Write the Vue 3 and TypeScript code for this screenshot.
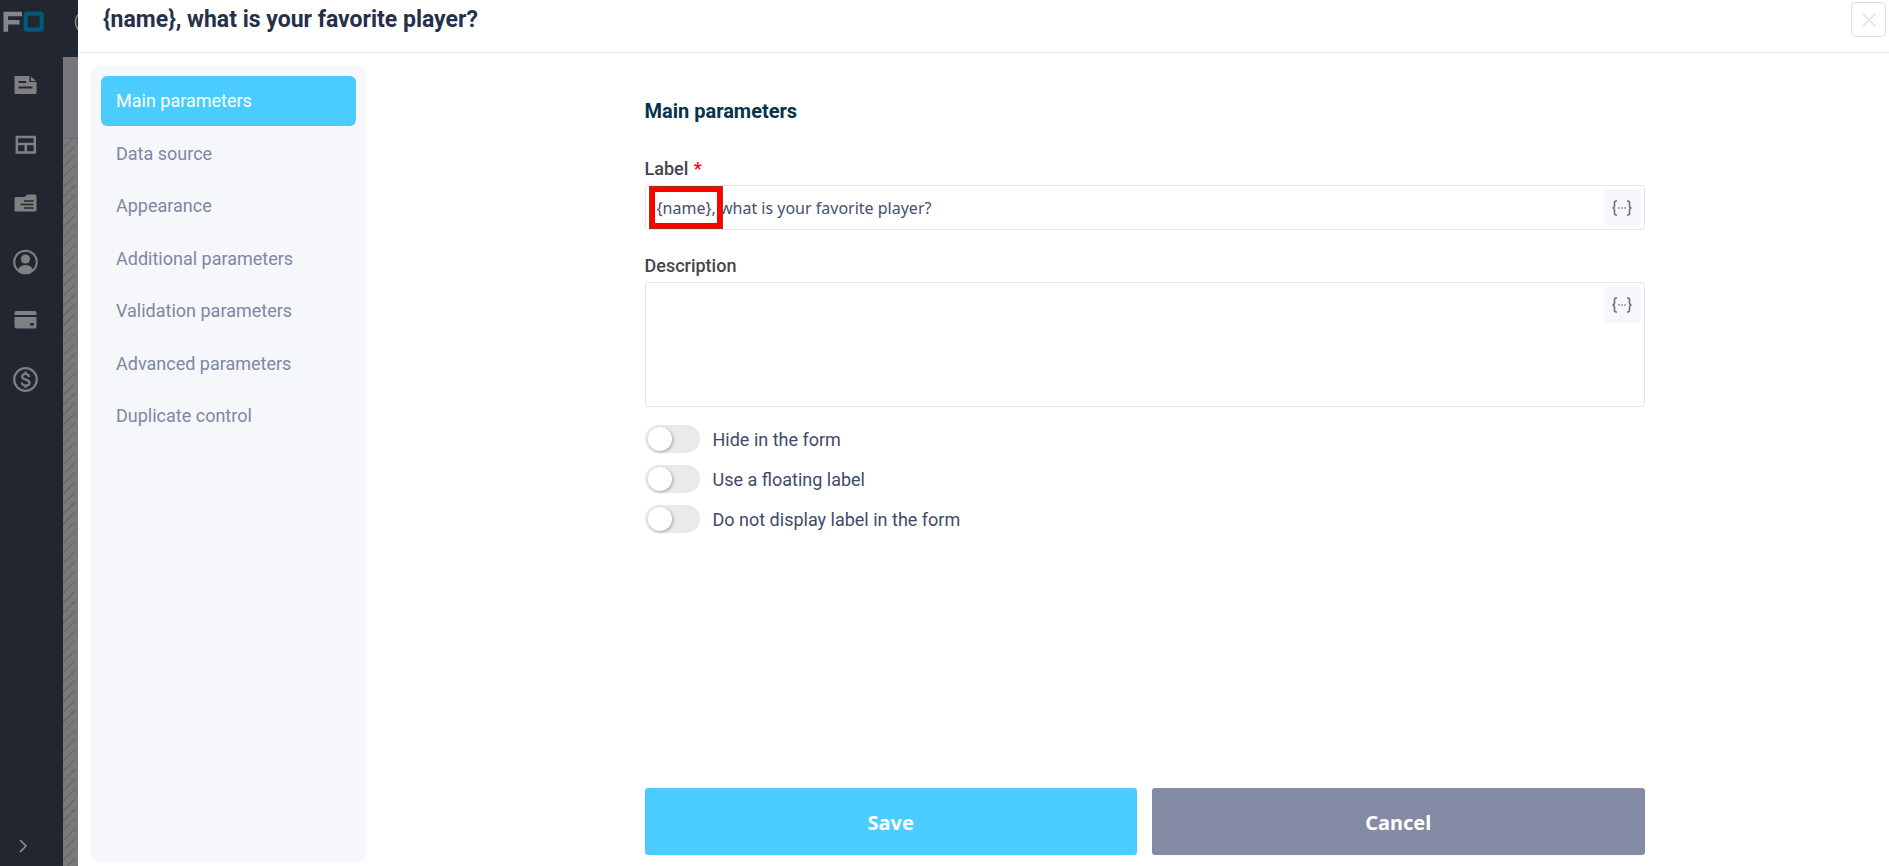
<script setup lang="ts">
import { ref } from 'vue'

const sections: string[] = [
  'Main parameters',
  'Data source',
  'Appearance',
  'Additional parameters',
  'Validation parameters',
  'Advanced parameters',
  'Duplicate control',
]
const active = ref('Main parameters')

const label = ref('{name}, what is your favorite player?')
const description = ref('')

const toggles = ref([
  { id: 'hide', text: 'Hide in the form', on: false },
  { id: 'floating', text: 'Use a floating label', on: false },
  { id: 'nolabel', text: 'Do not display label in the form', on: false },
])
</script>

<template>
  <div class="page">
    <aside class="rail">
      <a class="logo" href="#" aria-label="Home">
        <svg width="42" height="22" viewBox="0 0 42 22">
          <path d="M2.800 20.800V3H19M3 11.200H16.500" fill="none" stroke="#858687" stroke-width="4.600" />
          <rect x="22.700" y="2.700" width="16" height="16" rx="1" fill="none" stroke="#02597c" stroke-width="4.200" />
        </svg>
      </a>
      <nav class="rail-nav" aria-label="Workspace">
        <a href="#" aria-label="Forms">
          <svg viewBox="0 0 26 26">
            <path fill="#7f8081" d="M3 4h14.500v6H24.500v10.500a1.500 1.500 0 0 1-1.500 1.500H4a1.500 1.500 0 0 1-1.500-1.500V4zM19 4.500l5 4.500h-5z" />
            <path d="M6.500 10h7.500M6.500 15.500h14" stroke="#222630" stroke-width="2" />
          </svg>
        </a>
        <a href="#" aria-label="Templates">
          <svg viewBox="0 0 26 26">
            <path fill="none" stroke="#7f8081" stroke-width="2.500" d="M4.800 6h18v15.500h-18zM4.800 13h18M13.800 13v8.500" />
          </svg>
        </a>
        <a href="#" aria-label="Files">
          <svg viewBox="0 0 26 26">
            <path fill="#7f8081" d="M2.500 8.500A1.500 1.500 0 0 1 4 7h8.500L15.500 4.500H23A1.500 1.500 0 0 1 24.500 6v14a1.500 1.500 0 0 1-1.500 1.500H4A1.500 1.500 0 0 1 2.500 20z" />
            <path d="M12 11h9.500M8.500 14.500h13M12 18h9.500" stroke="#222630" stroke-width="1.500" />
          </svg>
        </a>
        <a href="#" aria-label="Profile">
          <svg viewBox="0 0 26 26">
            <circle cx="13.500" cy="13" r="11.300" fill="none" stroke="#7f8081" stroke-width="2" />
            <circle cx="13.500" cy="10" r="4.600" fill="#7f8081" />
            <path fill="#7f8081" d="M6 20.500C7.500 17.200 10.500 16 13.500 16s6 1.200 7.500 4.500C19 23 16.500 24.500 13.500 24.500S8 23 6 20.500z" />
          </svg>
        </a>
        <a href="#" aria-label="Billing">
          <svg viewBox="0 0 26 26">
            <path fill="#7f8081" d="M2.500 5a2 2 0 0 1 2-2h18a2 2 0 0 1 2 2v2H2.500zM2.500 9h22V18.500a2 2 0 0 1-2 2h-18a2 2 0 0 1-2-2z" />
            <rect x="18" y="15" width="4" height="2.500" rx="1" fill="#222630" />
          </svg>
        </a>
        <a href="#" aria-label="Prices">
          <svg viewBox="0 0 26 26">
            <circle cx="13.500" cy="12.500" r="11.300" fill="none" stroke="#7f8081" stroke-width="2.200" />
            <path fill="none" stroke="#7f8081" stroke-width="2.200" d="M17.200 10c-.2-2-1.600-3-3.600-3-2.100 0-3.500 1-3.500 2.700 0 3.800 7.400 2 7.400 6 0 1.800-1.500 2.800-3.800 2.800-2.200 0-3.800-1.100-3.900-3M13.600 4.500V7M13.600 18.500V21" />
          </svg>
        </a>
      </nav>
      <button class="expand" type="button" aria-label="Expand menu">
        <svg width="8" height="14" viewBox="0 0 8 14">
          <path d="M1 1l6 6-6 6" fill="none" stroke="#929394" stroke-width="1.500" />
        </svg>
      </button>
    </aside>

    <div class="backdrop">
      <div class="backdrop-head">
        <svg width="15" height="26" viewBox="0 0 15 26">
          <circle cx="24" cy="13" r="11.500" fill="none" stroke="#85878b" stroke-width="1.500" />
        </svg>
      </div>
      <div class="backdrop-bar"></div>
      <div class="backdrop-canvas"></div>
    </div>

    <section class="drawer" aria-labelledby="drawer-title">
      <header class="drawer-head">
        <h1 id="drawer-title">{{ label }}</h1>
        <button class="close" type="button" aria-label="Close">
          <svg width="14" height="14" viewBox="0 0 14 14">
            <path d="M.5.5l13 13M13.500.5l-13 13" stroke="#dedede" stroke-width="1.300" />
          </svg>
        </button>
      </header>

      <div class="drawer-body">
        <nav class="sections" aria-label="Sections">
          <div class="sections-list">
            <button
              v-for="s in sections"
              :key="s"
              type="button"
              :class="{ active: s === active }"
              @click="active = s"
            >{{ s }}</button>
          </div>
        </nav>

        <main class="content">
          <form class="form" @submit.prevent>
            <h2>{{ active }}</h2>

            <label class="field-label" for="f-label">Label <span class="required">*</span></label>
            <div class="box box-line">
              <input id="f-label" v-model="label" type="text" />
              <button class="insert" type="button" aria-label="Insert variable into label">
                <svg width="22" height="16" viewBox="0 0 22 16">
                  <path d="M6 1H5Q3.500 1 3.500 3v2.500Q3.500 8 1.500 8q2 0 2 2.500V13q0 2 1.500 2h1M16 1h1q1.500 0 1.500 2v2.500q0 2.500 2 2.500-2 0-2 2.500V13q0 2-1.500 2h-1" fill="none" stroke="#6e7177" stroke-width="1.600" />
                  <path d="M7 8h2M10 8h2M13 8h2" stroke="#9a9da3" stroke-width="1.300" />
                </svg>
              </button>
              <span class="marker"></span>
            </div>

            <label class="field-label" for="f-desc">Description</label>
            <div class="box box-area">
              <textarea id="f-desc" v-model="description"></textarea>
              <button class="insert" type="button" aria-label="Insert variable into description">
                <svg width="22" height="16" viewBox="0 0 22 16">
                  <path d="M6 1H5Q3.500 1 3.500 3v2.500Q3.500 8 1.500 8q2 0 2 2.500V13q0 2 1.500 2h1M16 1h1q1.500 0 1.500 2v2.500q0 2.500 2 2.500-2 0-2 2.500V13q0 2-1.500 2h-1" fill="none" stroke="#6e7177" stroke-width="1.600" />
                  <path d="M7 8h2M10 8h2M13 8h2" stroke="#9a9da3" stroke-width="1.300" />
                </svg>
              </button>
            </div>

            <div class="toggles">
              <label v-for="t in toggles" :key="t.id" :for="t.id">
                <input :id="t.id" v-model="t.on" type="checkbox" role="switch" />
                <span>{{ t.text }}</span>
              </label>
            </div>

            <footer class="actions">
              <button class="save" type="submit">Save</button>
              <button class="cancel" type="button">Cancel</button>
            </footer>
          </form>
        </main>
      </div>
    </section>
  </div>
</template>

<style>
body {
  margin: 0;
}
</style>

<style scoped>
* {
  box-sizing: border-box;
}

.page {
  display: grid;
  grid-template-columns: 63px 15px 1fr;
  min-height: 100vh;
  font-family: Roboto, 'Liberation Sans', sans-serif;
  font-size: 18px;
  line-height: 24px;
  background: #fff;
}

button {
  font: inherit;
  border: 0;
  padding: 0;
  background: none;
  cursor: pointer;
}

svg {
  display: block;
}

.rail {
  display: flex;
  flex-direction: column;
  background: #222630;
}

.logo {
  padding: 11px 0 0 3px;
  height: 72px;
}

.rail-nav {
  display: flex;
  flex-direction: column;
  gap: 33px;
  padding-left: 12px;
}

.rail-nav svg {
  width: 26px;
  height: 26px;
}

.expand {
  margin: auto 0 13px 19px;
  align-self: flex-start;
}

.backdrop {
  display: flex;
  flex-direction: column;
  background: #77787a;
}

.backdrop-head {
  height: 57px;
  padding-top: 9px;
  background: #222630;
}

.backdrop-bar {
  height: 82px;
  background: #77777b;
  border-bottom: 1px solid #6c6d6f;
}

.backdrop-canvas {
  flex: 1;
  margin-right: 3px;
  background: repeating-linear-gradient(135deg, #7a7a7a 0 5px, #696a6a 6px 7px, #7a7a7a 7px);
}

.drawer {
  display: flex;
  flex-direction: column;
  min-width: 0;
  background: #fff;
}

.drawer-head {
  display: flex;
  justify-content: space-between;
  align-items: flex-start;
  height: 53px;
  padding: 2px 3px 0 25px;
  border-bottom: 1px solid #e6e8f0;
}

h1 {
  margin: 4px 0 0;
  font-size: 23px;
  line-height: 28px;
  font-weight: 700;
  color: #27304a;
}

.close {
  display: grid;
  place-items: center;
  width: 35px;
  height: 35px;
  border: 1px solid #dedede;
  border-radius: 5px;
}

.drawer-body {
  display: flex;
  flex: 1;
  gap: 34px;
  padding: 13px 0 4px 13px;
}

.sections {
  width: 275px;
  padding: 10px;
  border-radius: 8px;
  background: #f5f7fb;
}

.sections-list {
  display: flex;
  flex-direction: column;
  justify-content: space-between;
  height: 365px;
}

.sections button {
  height: 50px;
  padding: 0 15px;
  border-radius: 6px;
  text-align: left;
  color: #7e88a1;
}

.sections .active {
  background: #4bccff;
  color: #fff;
}

.content {
  display: flex;
  flex: 1;
  justify-content: center;
}

.form {
  display: flex;
  flex-direction: column;
  width: 100%;
  max-width: 1000px;
  padding: 31px 0 7px;
}

h2 {
  margin: 0 0 32px;
  font-size: 20px;
  line-height: 28px;
  font-weight: 700;
  color: #04334a;
}

.field-label {
  margin-bottom: 4px;
  font-weight: 500;
  color: #45464b;
}

.required {
  margin-left: 1px;
  color: #f00;
}

.box {
  position: relative;
  display: flex;
  align-items: flex-start;
  padding: 3px;
  border: 1px solid #e5e6ea;
  border-radius: 3px;
}

.box-line {
  height: 45px;
  margin-bottom: 24px;
}

.box-area {
  height: 125px;
}

.box input,
.box textarea {
  flex: 1;
  min-width: 0;
  height: 100%;
  padding: 0 8px;
  border: 0;
  outline: 0;
  resize: none;
  background: none;
  color: #44506e;
  font-family: 'Noto Sans', sans-serif;
  font-size: 16px;
}

.insert {
  display: grid;
  place-items: center;
  width: 37px;
  height: 37px;
  border-radius: 4px;
  background: #f5f7fb;
}

.marker {
  position: absolute;
  left: 3px;
  top: 0;
  width: 74px;
  height: 43px;
  border: 6px solid #fe0000;
  outline: 1px solid #a33a10;
  outline-offset: -1px;
  pointer-events: none;
}

.toggles {
  display: flex;
  flex-direction: column;
  gap: 12px;
  margin-top: 18px;
}

.toggles label {
  display: flex;
  align-items: center;
  align-self: flex-start;
  gap: 13px;
  height: 28px;
  color: #3f4a68;
  cursor: pointer;
}

.toggles span {
  padding-top: 2px;
}

.toggles input {
  appearance: none;
  display: flex;
  width: 55px;
  height: 28px;
  margin: 0;
  padding: 2px 3px;
  border-radius: 14px;
  background: #e9eaec;
}

.toggles input::before {
  content: '';
  width: 24px;
  height: 24px;
  border-radius: 50%;
  background: #fff;
  box-shadow: 1px 1px 3px rgba(0, 0, 0, 0.3);
}

.toggles input:checked {
  justify-content: flex-end;
  background: #4bccff;
}

.actions {
  display: flex;
  gap: 15px;
  margin-top: auto;
}

.actions button {
  flex: 1;
  height: 67px;
  padding-top: 2px;
  border-radius: 3px;
  color: #fff;
  font-family: 'Noto Sans', sans-serif;
  font-size: 20px;
  font-weight: 700;
}

.actions .save {
  background: #4bccff;
}

.actions .cancel {
  background: #838ca4;
}
</style>
